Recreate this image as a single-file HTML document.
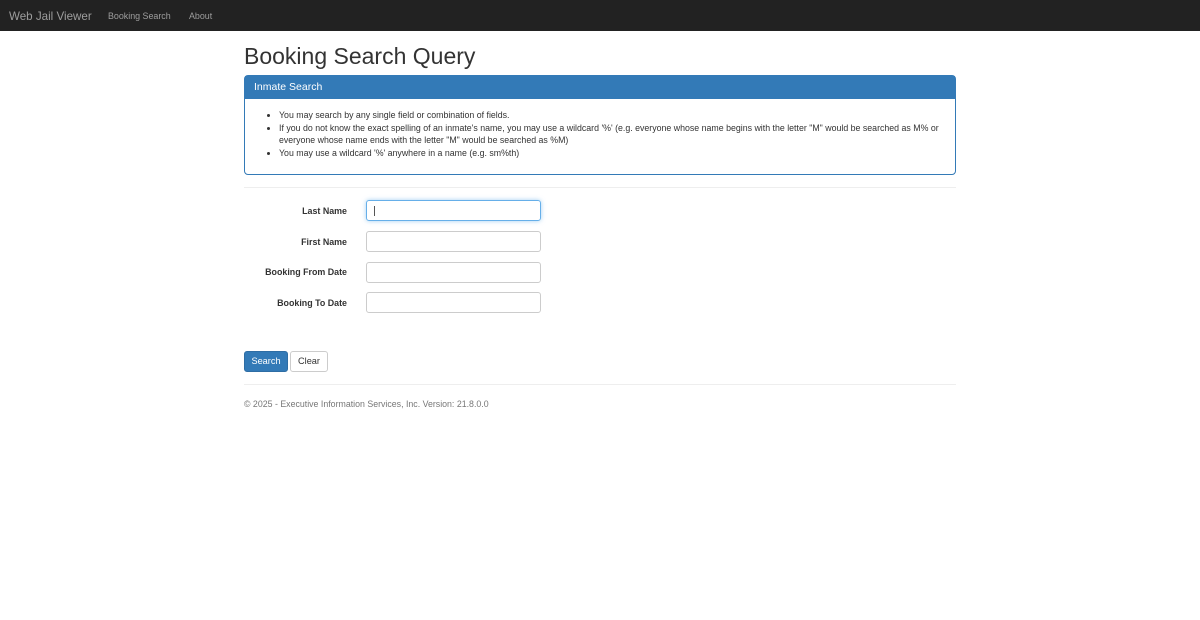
<!DOCTYPE html>
<html><head><meta charset="utf-8"><style>
*{box-sizing:border-box}
body{margin:0;font-family:"Liberation Sans",sans-serif;font-size:14px;color:#333;background:#fff}
.nav{position:absolute;top:0;left:0;width:1200px;height:31px;background:#222;}
.nav span{position:absolute;top:0;line-height:31px;color:#9d9d9d}
h1{position:absolute;left:244px;top:42px;margin:0;font-size:23px;font-weight:400;line-height:28px}
.panel{position:absolute;left:244px;top:75px;width:712px;height:100px;border:1px solid #337ab7;border-radius:4px}
.ph{background:#337ab7;color:#fff;height:23px;line-height:23px;padding-left:9px;font-size:10.5px}
ul{margin:10px 0 0 0;padding-left:34px;font-size:8.8px;line-height:12.5px}
hr{position:absolute;left:244px;width:712px;border:0;border-top:1px solid #eee;margin:0}
.lbl{position:absolute;width:103px;left:244px;text-align:right;font-weight:bold;font-size:8.9px}
.in{position:absolute;left:366px;width:175px;height:21px;border:1px solid #ccc;border-radius:3px}
.btn{position:absolute;top:351px;height:21px;line-height:19px;font-size:9.2px;border-radius:3px;text-align:center}
</style></head><body>
<div class="nav"><span style="left:9px;font-size:11.6px;top:1px">Web Jail Viewer</span><span style="left:108px;font-size:8.9px;top:1px">Booking Search</span><span style="left:189px;font-size:8.9px;top:1px">About</span></div>
<h1>Booking Search Query</h1>
<div class="panel"><div class="ph">Inmate Search</div>
<ul><li>You may search by any single field or combination of fields.</li>
<li>If you do not know the exact spelling of an inmate's name, you may use a wildcard '%' (e.g. everyone whose name begins with the letter "M" would be searched as M% or everyone whose name ends with the letter "M" would be searched as %M)</li>
<li>You may use a wildcard '%' anywhere in a name (e.g. sm%th)</li></ul></div>
<hr style="top:187px">
<div class="lbl" style="top:206px">Last Name</div>
<div class="in" style="top:200px;border-color:#66afe9;box-shadow:0 0 5px rgba(102,175,233,.6)"><div style="position:absolute;left:7px;top:5px;width:1px;height:10px;background:#555"></div></div>
<div class="lbl" style="top:237px">First Name</div><div class="in" style="top:231px"></div>
<div class="lbl" style="top:267px">Booking From Date</div><div class="in" style="top:262px"></div>
<div class="lbl" style="top:298px">Booking To Date</div><div class="in" style="top:292px"></div>
<div class="btn" style="left:244px;width:44px;background:#337ab7;border:1px solid #2e6da4;color:#fff">Search</div>
<div class="btn" style="left:290px;width:38px;border:1px solid #ccc;color:#333">Clear</div>
<hr style="top:384px">
<div style="position:absolute;left:244px;top:399px;font-size:8.8px;color:#777">© 2025 - Executive Information Services, Inc. Version: 21.8.0.0</div>
</body></html>
